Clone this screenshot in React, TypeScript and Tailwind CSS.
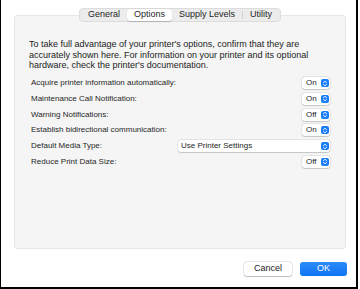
import React from "react";

const font = { fontFamily: '"Liberation Sans", Arial, sans-serif' };

function Stepper() {
  return (
    <span className="flex h-[8px] w-[8px] items-center justify-center rounded-[2px] bg-[#1a7cf7]">
      <svg width="6" height="7" viewBox="0 0 6 7" fill="none">
        <path d="M1.5 2.6 L3 1.2 L4.5 2.6" stroke="white" strokeWidth="0.9" strokeLinecap="round" strokeLinejoin="round" />
        <path d="M1.5 4.4 L3 5.8 L4.5 4.4" stroke="white" strokeWidth="0.9" strokeLinecap="round" strokeLinejoin="round" />
      </svg>
    </span>
  );
}

function Popup({ value }: { value: string }) {
  return (
    <div className="flex h-[12px] w-[28px] items-center justify-between rounded-[3px] bg-white pl-[4px] pr-[1.5px] shadow-[0_0_0_0.5px_rgba(0,0,0,0.12),0_0.5px_1px_rgba(0,0,0,0.15)]">
      <span className="text-[8px] leading-none text-[#262626]">{value}</span>
      <Stepper />
    </div>
  );
}

const rows: { label: string; value: string; wide?: boolean }[] = [
  { label: "Acquire printer information automatically:", value: "On" },
  { label: "Maintenance Call Notification:", value: "On" },
  { label: "Warning Notifications:", value: "Off" },
  { label: "Establish bidirectional communication:", value: "On" },
  { label: "Default Media Type:", value: "Use Printer Settings", wide: true },
  { label: "Reduce Print Data Size:", value: "Off" },
];

export default function App() {
  return (
    <div className="h-[289px] w-[360px] overflow-hidden bg-white" style={font}>
      <div className="flex h-[289px] w-[358px] flex-col border-b-2 border-l border-r-2 border-black">
        <div className="flex flex-col pl-[13px] pt-[8px]">
          <div className="z-10 ml-[65px] flex h-[14px] items-center self-start rounded-[4px] border border-[#dcdcdc] bg-[#ececec] px-[1px] text-[9px] text-[#1f1f1f]">
            <span className="px-[7px]">General</span>
            <span className="flex h-[12px] items-center rounded-[3px] bg-white px-[7px] shadow-[0_0.5px_1px_rgba(0,0,0,0.2)]">Options</span>
            <span className="px-[7px]">Supply Levels</span>
            <span className="h-[8px] w-px bg-[#cfcfcf]" />
            <span className="px-[7px]">Utility</span>
          </div>
          <div className="-mt-[7px] h-[234px] w-[332px] rounded-[3px] border border-[#e6e6e6] bg-[#f5f5f5] pl-[14px] pr-[15px] pt-[23px]">
            <p className="text-[9px] leading-[10.7px] text-[#222]">
              To take full advantage of your printer's options, confirm that they are accurately shown here. For information on your printer and its optional hardware, check the printer's documentation.
            </p>
            <div className="mt-[4px] flex flex-col">
              {rows.map((r) => (
                <div key={r.label} className="flex h-[15.8px] items-center justify-between pl-[2px]">
                  <span className="text-[8px] text-[#262626]">{r.label}</span>
                  {r.wide ? (
                    <div className="flex h-[12px] w-[152px] items-center justify-between rounded-[3px] bg-white pl-[3px] pr-[1.5px] shadow-[0_0_0_0.5px_rgba(0,0,0,0.12),0_0.5px_1px_rgba(0,0,0,0.15)]">
                      <span className="text-[8px] leading-none text-[#262626]">{r.value}</span>
                      <Stepper />
                    </div>
                  ) : (
                    <Popup value={r.value} />
                  )}
                </div>
              ))}
            </div>
          </div>
        </div>
        <div className="mr-[9px] mt-[13px] flex justify-end gap-[8px]">
          <button className="flex h-[14px] w-[48px] items-center justify-center rounded-[3px] bg-white text-[9px] text-[#222] shadow-[0_0_0_0.5px_rgba(0,0,0,0.15),0_0.5px_1px_rgba(0,0,0,0.2)]">
            Cancel
          </button>
          <button className="flex h-[14px] w-[47px] items-center justify-center rounded-[3px] bg-gradient-to-b from-[#2b8bfa] to-[#0f74f2] text-[9px] text-white">
            OK
          </button>
        </div>
      </div>
    </div>
  );
}
